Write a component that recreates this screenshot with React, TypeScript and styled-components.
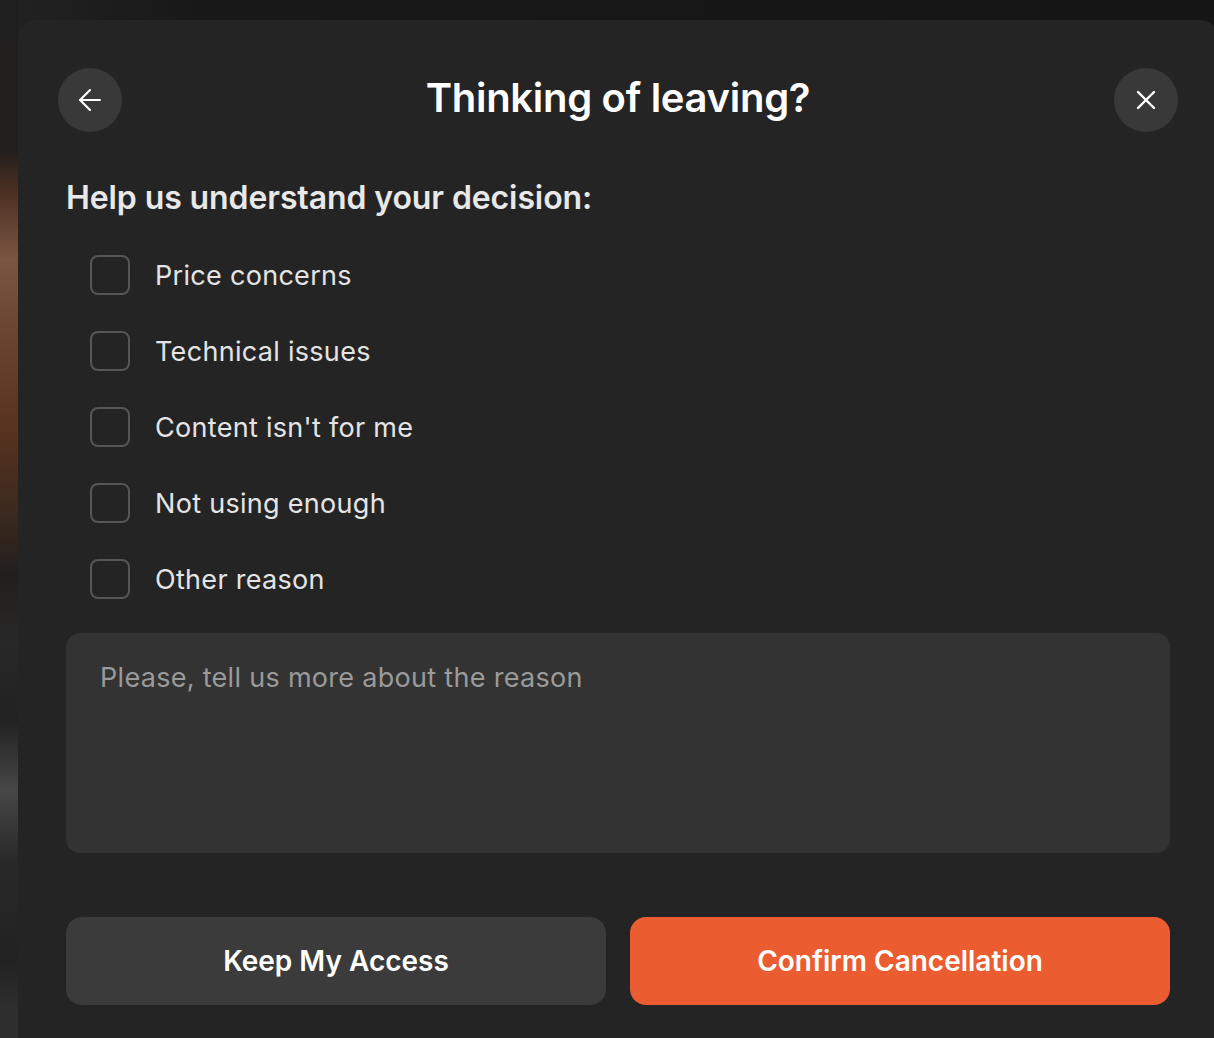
import styled, { createGlobalStyle } from "styled-components";

const GlobalStyle = createGlobalStyle`
  html, body {
    margin: 0;
    padding: 0;
    background: #151515;
    font-family: Inter, "Noto Sans", sans-serif;
    -webkit-font-smoothing: antialiased;
  }
  * { box-sizing: border-box; }
`;

const reasons = [
  "Price concerns",
  "Technical issues",
  "Content isn't for me",
  "Not using enough",
  "Other reason",
];

const Page = {
  Backdrop: styled.div`
    position: relative;
    width: 100vw;
    height: 100vh;
    overflow: hidden;
    padding: 20px 0 0 18px;
    background:
      linear-gradient(
        180deg,
        #1f1f1f 0px,
        #221e1c 150px,
        #4a3022 190px,
        #7a5542 260px,
        #6b4532 330px,
        #5a3420 420px,
        #3c2a1e 510px,
        #221f1d 575px,
        #282828 640px,
        #222 720px,
        #474747 790px,
        #292929 860px,
        #222 960px,
        #2e2e2e 1010px
      ) left top / 18px 100% no-repeat,
      linear-gradient(90deg, #222 0px, #181818 200px, #151515 100%);
  `,
};

const Modal = {
  Card: styled.div`
    width: 1200px;
    min-height: 1040px;
    background: #242424;
    border-radius: 18px;
    padding: 48px 40px;
  `,
  Header: styled.div`
    display: flex;
    align-items: center;
    justify-content: space-between;
  `,
  RoundButton: styled.button`
    width: 64px;
    height: 64px;
    border-radius: 50%;
    border: none;
    background: #393939;
    color: #fff;
    display: flex;
    align-items: center;
    justify-content: center;
    padding: 0;
    cursor: pointer;
  `,
  Title: styled.h1`
    margin: 0;
    font-size: 40px;
    font-weight: 600;
    color: #fff;
    letter-spacing: -0.3px;
    position: relative;
    top: -3px;
  `,
  Body: styled.div`
    padding: 0 8px;
  `,
  Subtitle: styled.h2`
    margin: 46px 0 38px;
    font-size: 32px;
    font-weight: 600;
    color: #e8e8e8;
    letter-spacing: -0.1px;
  `,
  List: styled.div`
    display: flex;
    flex-direction: column;
    gap: 36px;
    padding-left: 24px;
  `,
  Option: styled.label`
    display: flex;
    align-items: center;
    gap: 25px;
    cursor: pointer;
    font-size: 27px;
    color: #e4e4e4;
    letter-spacing: 0.3px;
  `,
  Box: styled.span`
    width: 40px;
    height: 40px;
    border: 2px solid #565656;
    border-radius: 8px;
    flex-shrink: 0;
  `,
  TextArea: styled.textarea`
    display: block;
    width: 100%;
    height: 220px;
    margin-top: 34px;
    background: #333;
    border: none;
    border-radius: 14px;
    padding: 28px 34px;
    resize: none;
    font-family: Inter, "Noto Sans", sans-serif;
    font-size: 27px;
    color: #e4e4e4;
    letter-spacing: 0.3px;
    outline: none;

    &::placeholder {
      color: #9a9a9a;
    }
  `,
  Actions: styled.div`
    display: grid;
    grid-template-columns: 1fr 1fr;
    gap: 24px;
    margin-top: 64px;
  `,
  Action: styled.button<{ $primary?: boolean }>`
    height: 88px;
    border: none;
    border-radius: 16px;
    background: ${(p) => (p.$primary ? "#eb5d30" : "#3b3b3b")};
    color: #fff;
    font-family: Inter, "Noto Sans", sans-serif;
    font-size: 28px;
    font-weight: 600;
    cursor: pointer;
  `,
};

const ArrowLeft = () => (
  <svg width="34" height="34" viewBox="0 0 24 24" fill="none" stroke="currentColor" strokeWidth="1.5" strokeLinecap="round" strokeLinejoin="round">
    <path d="M19 12H5" />
    <path d="M12 19l-7-7 7-7" />
  </svg>
);

const CloseIcon = () => (
  <svg width="32" height="32" viewBox="0 0 24 24" fill="none" stroke="currentColor" strokeWidth="1.8" strokeLinecap="round">
    <path d="M6 6l12 12" />
    <path d="M18 6L6 18" />
  </svg>
);

const App = () => {
  return (
    <>
      <GlobalStyle />
      <Page.Backdrop>
        <Modal.Card>
          <Modal.Header>
            <Modal.RoundButton aria-label="Back">
              <ArrowLeft />
            </Modal.RoundButton>
            <Modal.Title>Thinking of leaving?</Modal.Title>
            <Modal.RoundButton aria-label="Close">
              <CloseIcon />
            </Modal.RoundButton>
          </Modal.Header>

          <Modal.Body>
            <Modal.Subtitle>Help us understand your decision:</Modal.Subtitle>
            <Modal.List>
              {reasons.map((r) => (
                <Modal.Option key={r}>
                  <Modal.Box />
                  {r}
                </Modal.Option>
              ))}
            </Modal.List>

            <Modal.TextArea placeholder="Please, tell us more about the reason" />

            <Modal.Actions>
              <Modal.Action>Keep My Access</Modal.Action>
              <Modal.Action $primary>Confirm Cancellation</Modal.Action>
            </Modal.Actions>
          </Modal.Body>
        </Modal.Card>
      </Page.Backdrop>
    </>
  );
};

export default App;
